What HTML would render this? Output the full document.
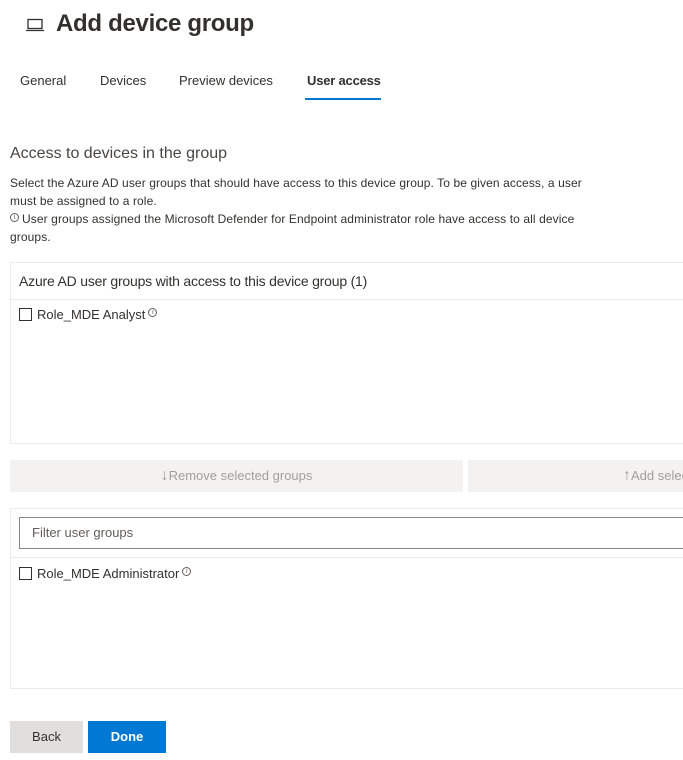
<!DOCTYPE html>
<html style="overflow:hidden"><head><meta charset="utf-8"><style>
*{box-sizing:border-box;margin:0;padding:0}
body{width:683px;height:760px;overflow:hidden;background:#fff;font-family:"Liberation Sans",sans-serif;color:#323130;position:relative}
.a{position:absolute;white-space:nowrap}
.t{font-size:13px;letter-spacing:0}
.s{font-size:12px;letter-spacing:0.1px;line-height:18px}
.cb{position:absolute;width:13px;height:13px;border:1px solid #323130;background:#fff}
.info{display:inline-block;width:9px;height:9px;border:1px solid #605e5c;border-radius:50%;font-size:7px;line-height:7px;text-align:center;vertical-align:top;margin-left:3px;margin-top:1px;color:#605e5c}
</style></head><body>
<svg class="a" style="left:25px;top:18px" width="20" height="14" viewBox="0 0 20 14"><rect x="3" y="1.5" width="14" height="9" fill="none" stroke="#323130" stroke-width="1.3"/><path d="M1 12.5h18" stroke="#323130" stroke-width="1.3"/></svg>
<div class="a" style="left:56px;top:10px;font-size:24px;font-weight:bold;letter-spacing:-0.3px;color:#323130">Add device group</div>
<div class="a t" style="left:20px;top:73px">General</div>
<div class="a t" style="left:100px;top:73px">Devices</div>
<div class="a t" style="left:179px;top:73px">Preview devices</div>
<div class="a t" style="left:307px;top:73px;font-weight:bold;letter-spacing:-0.2px">User access</div>
<div class="a" style="left:305px;top:98px;width:76px;height:2px;background:#0078d4"></div>
<div class="a" style="left:10px;top:145px;font-size:16px;color:#484644;letter-spacing:0">Access to devices in the group</div>
<div class="a s" style="left:10px;top:174px">Select the Azure AD user groups that should have access to this device group. To be given access, a user<br>must be assigned to a role.<br><span class="info" style="margin:3px 3px 0 0">i</span>User groups assigned the Microsoft Defender for Endpoint administrator role have access to all device<br>groups.</div>
<div class="a" style="left:10px;top:262px;width:690px;height:182px;border:1px solid #edebe9"></div>
<div class="a" style="left:10px;top:299px;width:690px;height:1px;background:#edebe9"></div>
<div class="a" style="left:19px;top:273px;font-size:14px;letter-spacing:-0.2px">Azure AD user groups with access to this device group (1)</div>
<div class="cb" style="left:19px;top:308px"></div>
<div class="a t" style="left:37px;top:307px">Role_MDE Analyst<span class="info">i</span></div>
<div class="a t" style="left:10px;top:460px;width:453px;height:32px;background:#f3f2f1;color:#a19f9d;text-align:center;line-height:32px"><span style="font-size:16px">↓</span>Remove selected groups</div>
<div class="a t" style="left:468px;top:460px;width:215px;overflow:hidden;height:32px;background:#f3f2f1;color:#a19f9d;padding-left:155px;line-height:32px"><span style="font-size:16px">↑</span>Add selected groups</div>
<div class="a" style="left:10px;top:508px;width:690px;height:181px;border:1px solid #edebe9"></div>
<div class="a" style="left:19px;top:517px;width:680px;height:32px;border:1px solid #8a8886;background:#fff"></div>
<div class="a t" style="left:32px;top:525px;color:#605e5c">Filter user groups</div>
<div class="a" style="left:10px;top:557px;width:690px;height:1px;background:#edebe9"></div>
<div class="cb" style="left:19px;top:567px"></div>
<div class="a t" style="left:37px;top:566px">Role_MDE Administrator<span class="info">i</span></div>
<div class="a t" style="left:10px;top:721px;width:73px;height:32px;background:#e1dfdd;text-align:center;line-height:32px;color:#323130">Back</div>
<div class="a t" style="left:88px;top:721px;width:78px;height:32px;background:#0078d4;text-align:center;line-height:32px;font-weight:bold;color:#fff">Done</div>
</body></html>
